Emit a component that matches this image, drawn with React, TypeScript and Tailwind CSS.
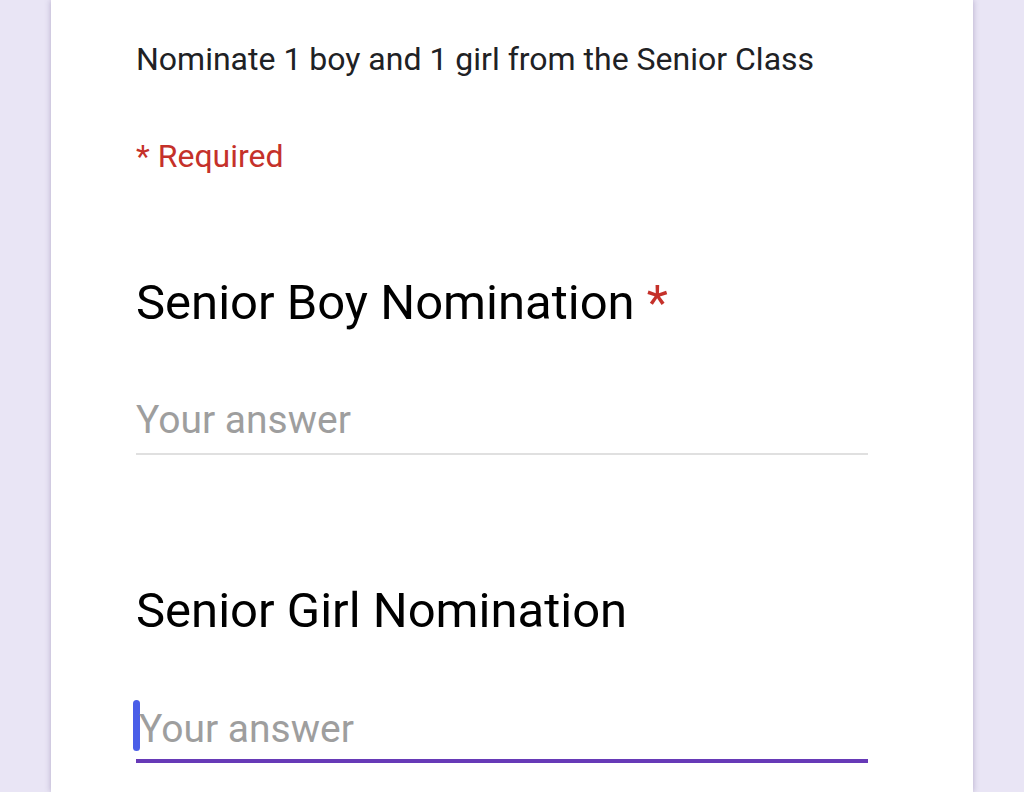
export default function App() {
  return (
    <div className="w-[1024px] h-[792px] overflow-hidden bg-[#e9e5f5] flex justify-start" style={{ fontFamily: 'Roboto, "Liberation Sans", sans-serif' }}>
      <div className="ml-[51px] w-[922px] h-full bg-white shadow-[0_0_6px_rgba(80,60,120,0.35)] pl-[85px] pr-[105px]">
        <p className="pt-[39px] text-[32px] leading-[40px] text-[#202124]">Nominate 1 boy and 1 girl from the Senior Class</p>
        <p className="mt-[57px] text-[32px] leading-[40px] text-[#c5312a]">* Required</p>
        <h2 className="mt-[97px] text-[49px] leading-[60px] text-black">
          Senior Boy Nomination <span className="text-[#c5312a]">*</span>
        </h2>
        <div className="mt-[63px] border-b-2 border-[#e0e0e0] h-[59px] text-[39px] leading-[48px] text-[#9e9e9e]">Your answer</div>
        <h2 className="mt-[126px] text-[49px] leading-[60px] text-black">Senior Girl Nomination</h2>
        <div className="mt-[64px] border-b-4 border-[#673ab7] h-[58px] text-[39px] leading-[48px] text-[#9e9e9e] flex items-start">
          <span className="mt-[-5px] w-[7px] h-[51px] rounded-full bg-[#4a5ee8] -ml-[3px] shrink-0" />
          <span className="-ml-[1px]">Your answer</span>
        </div>
      </div>
    </div>
  );
}
